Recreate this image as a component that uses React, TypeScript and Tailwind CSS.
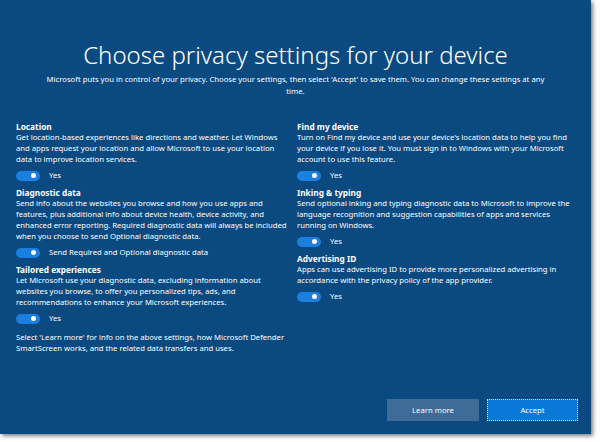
import React from "react";

function Toggle({ label }: { label: string }) {
  return (
    <div className="flex items-center gap-[9px] mt-[5px] mb-[6px]">
      <div className="w-[24px] h-[10px] rounded-full bg-[#1b7fe0] flex items-center justify-end pr-[4px]">
        <div className="w-[5px] h-[5px] rounded-full bg-white" />
      </div>
      <span>{label}</span>
    </div>
  );
}

function Section({ title, text, label }: { title: string; text: string; label: string }) {
  return (
    <div>
      <div className="font-bold text-[8.3px]">{title}</div>
      <div>{text}</div>
      <Toggle label={label} />
    </div>
  );
}

export default function App() {
  return (
    <div className="w-[600px] h-[442px] bg-white" style={{ fontFamily: '"Noto Sans", sans-serif' }}>
      <div className="w-[591px] h-[434px] bg-[#0b4a80] text-white shadow-[2px_2px_4px_rgba(0,0,0,0.5)] flex flex-col text-[7.7px] leading-[11px] text-[#f0f4f8]">
        <div className="text-center pt-[40px] text-[24px] leading-[30px] font-light text-white">
          Choose privacy settings for your device
        </div>
        <div className="text-center px-[40px] mt-[3px] text-[7.7px] leading-[12px]">
          Microsoft puts you in control of your privacy. Choose your settings, then select 'Accept' to save them. You can change these settings at any time.
        </div>
        <div className="grid grid-cols-[274px_280px] gap-x-[7px] px-[16px] mt-[24px]">
          <div>
            <Section
              title="Location"
              text="Get location-based experiences like directions and weather. Let Windows and apps request your location and allow Microsoft to use your location data to improve location services."
              label="Yes"
            />
            <Section
              title="Diagnostic data"
              text="Send info about the websites you browse and how you use apps and features, plus additional info about device health, device activity, and enhanced error reporting. Required diagnostic data will always be included when you choose to send Optional diagnostic data."
              label="Send Required and Optional diagnostic data"
            />
            <Section
              title="Tailored experiences"
              text="Let Microsoft use your diagnostic data, excluding information about websites you browse, to offer you personalized tips, ads, and recommendations to enhance your Microsoft experiences."
              label="Yes"
            />
            <div className="mt-[8px]">
              Select 'Learn more' for info on the above settings, how Microsoft Defender SmartScreen works, and the related data transfers and uses.
            </div>
          </div>
          <div>
            <Section
              title="Find my device"
              text="Turn on Find my device and use your device's location data to help you find your device if you lose it. You must sign in to Windows with your Microsoft account to use this feature."
              label="Yes"
            />
            <Section
              title="Inking & typing"
              text="Send optional inking and typing diagnostic data to Microsoft to improve the language recognition and suggestion capabilities of apps and services running on Windows."
              label="Yes"
            />
            <Section
              title="Advertising ID"
              text="Apps can use advertising ID to provide more personalized advertising in accordance with the privacy policy of the app provider."
              label="Yes"
            />
          </div>
        </div>
        <div className="mt-auto mb-[13px] flex justify-end gap-[8px] pr-[13px]">
          <div className="w-[92px] h-[22px] bg-[#3e6b98] flex items-center justify-center">Learn more</div>
          <div className="w-[91px] h-[22px] bg-[#0a78d7] border border-dotted border-white/80 flex items-center justify-center">Accept</div>
        </div>
      </div>
    </div>
  );
}
